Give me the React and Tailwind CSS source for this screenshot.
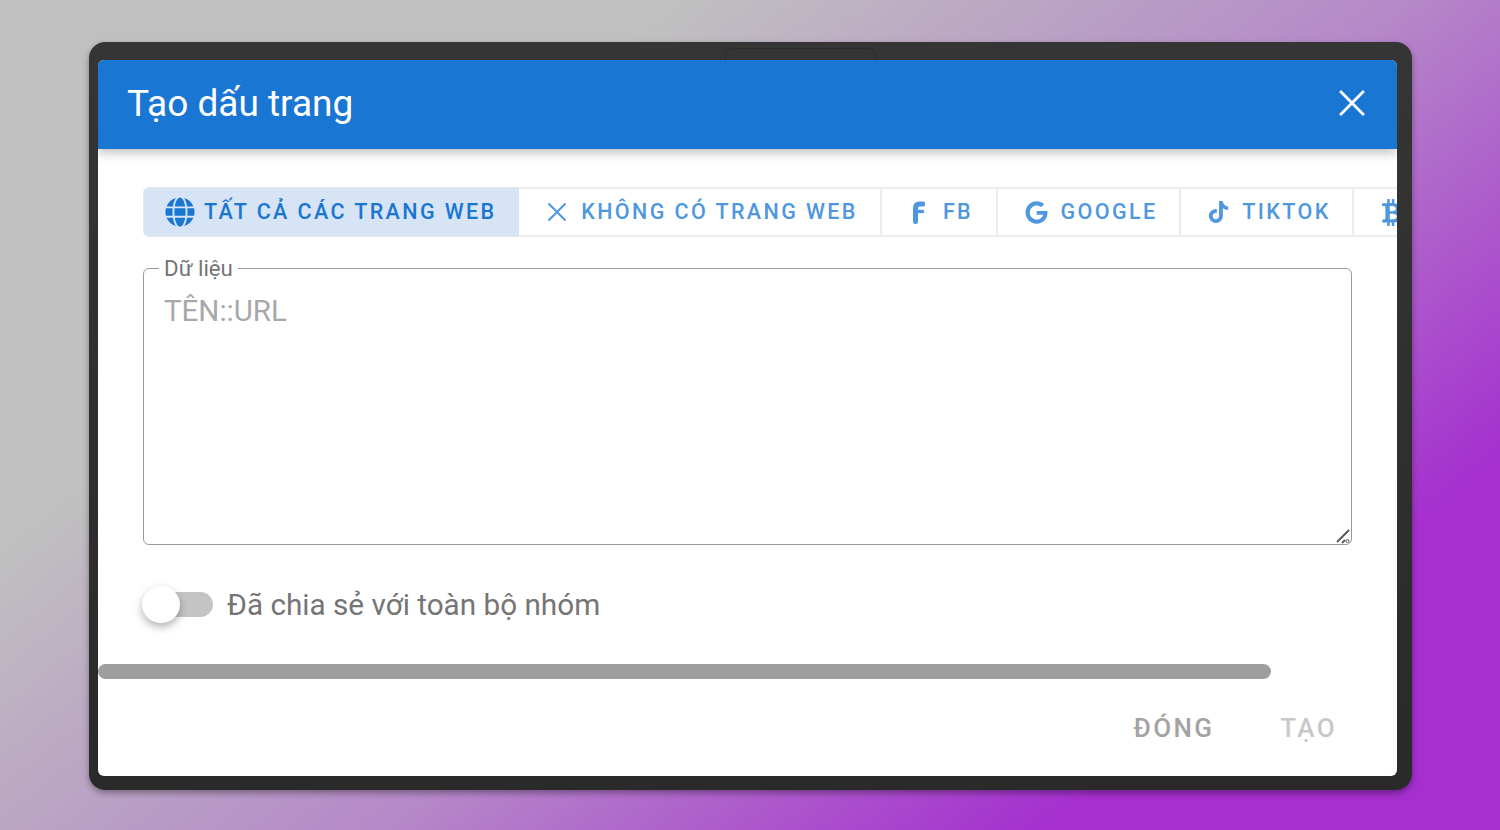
import { FaGlobe, FaGoogle, FaTiktok, FaBtc } from 'react-icons/fa'

function CloseIcon({ className = 'w-[20px] h-[20px]' }) {
  return (
    <svg className={className} viewBox="0 0 20 20" fill="none" stroke="currentColor" strokeWidth="2">
      <path d="M1.5 1.5l17 17M18.5 1.5l-17 17" />
    </svg>
  )
}

function FbIcon() {
  return (
    <svg className="w-[14px] h-[23px]" viewBox="0 0 14 23" fill="none" stroke="currentColor" strokeWidth="5" strokeLinecap="round">
      <path d="M4.5 20.5V7c0-2.6 1.4-4 4-4H12" strokeWidth="5" />
      <path d="M4.5 10.5H11.5" strokeWidth="3.5" />
    </svg>
  )
}

const tabs = [
  { label: 'KHÔNG CÓ TRANG WEB', w: 'w-[363px]', gap: 'gap-[14px]', icon: <CloseIcon /> },
  { label: 'FB', w: 'w-[116px]', gap: 'gap-[18px]', icon: <FbIcon /> },
  { label: 'GOOGLE', w: 'w-[183px]', gap: 'gap-[12px]', icon: <FaGoogle className="w-[23px] h-[23px]" /> },
  { label: 'TIKTOK', w: 'w-[173px]', gap: 'gap-[13px]', icon: <FaTiktok className="w-[21px] h-[22px]" /> },
]

export default function App() {
  return (
    <div className="h-[830px] pt-[42px] pl-[89px] overflow-hidden bg-[linear-gradient(141deg,#c0c0c0_0%,#c0c0c0_27%,#b588c8_56%,#a52fcf_82%,#a52fcf_100%)] font-['Roboto',sans-serif]">
      {/* Tablet frame */}
      <div className="relative w-[1323px] h-[748px] pt-[18px] pl-[9px] pr-[15px] pb-[14px] rounded-[16px] bg-[linear-gradient(180deg,#353535,#2a2a2a)] shadow-[0_3px_6px_rgba(0,0,0,0.35)]">
        <div className="absolute left-[636px] top-[6px] w-[151px] h-[12px] rounded-t-[8px] border border-b-0 border-[#272c33]" />

        <div className="relative flex flex-col w-full h-full bg-white rounded-[6px] overflow-hidden">
          <header className="relative z-10 flex items-center justify-between shrink-0 h-[89px] pl-[29px] pr-[31px] pb-[3px] bg-[#1976d2] text-white shadow-[0_4px_10px_rgba(0,0,0,0.25)]">
            <h1 className="text-[37px] leading-none font-normal">Tạo dấu trang</h1>
            <CloseIcon className="w-[28px] h-[28px]" />
          </header>

          <div className="flex-1 pl-[45px] pt-[38px] overflow-hidden">
            {/* Tabs */}
            <div className="flex h-[50px] w-[1300px] text-[#1976d2] text-[21.5px] font-medium tracking-[0.112em]">
              <div className="flex items-center gap-[9px] shrink-0 w-[376px] pl-[21px] bg-[#d6e4f5] border border-r-0 border-[#e4e8ee] rounded-l-[6px]">
                <FaGlobe className="w-[30px] h-[30px]" />
                <span>TẤT CẢ CÁC TRANG WEB</span>
              </div>
              {tabs.map(t => (
                <div key={t.label} className={`flex items-center justify-center shrink-0 pl-[6px] ${t.gap} ${t.w} border-y-2 border-r-2 border-[#ececec] text-[#4f97de]`}>
                  {t.icon}
                  <span>{t.label}</span>
                </div>
              ))}
              <div className="flex items-center shrink-0 pl-[26px] border-y-2 border-[#ececec] text-[#4f97de]">
                <FaBtc className="w-[24px] h-[27px]" />
              </div>
            </div>

            {/* Text field */}
            <div className="relative w-[1209px] h-[277px] mt-[31px]">
              <textarea
                placeholder="TÊN::URL"
                className="block w-full h-full px-[20px] pt-[24px] resize-none outline-none border border-[#9a9a9a] rounded-[6px] text-[29.5px] leading-[36px] placeholder:text-[#a8a8a8]"
              />
              <label className="absolute left-[16px] top-[-12px] px-[5px] bg-white text-[22.3px] leading-[24px] text-[#757575]">Dữ liệu</label>
              <svg className="absolute right-[1px] bottom-[1px] w-[15px] h-[15px] text-[#555]" viewBox="0 0 15 15" fill="none" stroke="currentColor" strokeWidth="1.8">
                <path d="M1 13L13 1M6 14l3-3" />
                <circle cx="11.5" cy="12" r="1.5" strokeWidth="1" />
              </svg>
            </div>

            {/* Switch */}
            <div className="flex items-center h-[38px] mt-[41px]">
              <div className="relative w-[70px] h-[38px] shrink-0">
                <div className="absolute left-[17px] right-0 top-[6px] h-[25px] rounded-full bg-[#c4c4c4]" />
                <div className="absolute left-[-1px] top-0 w-[38px] h-[37px] rounded-full bg-white shadow-[0_4px_8px_rgba(0,0,0,0.3)]" />
              </div>
              <span className="ml-[14px] text-[29.7px] leading-none text-[#757575]">Đã chia sẻ với toàn bộ nhóm</span>
            </div>
          </div>

          {/* Scrollbar */}
          <div className="shrink-0 w-[1173px] h-[15px] rounded-full bg-[#9e9e9e]" />

          <footer className="flex items-center justify-end shrink-0 h-[97px] pt-[2px] pr-[60px] gap-[66px] text-[26px] font-medium tracking-[0.09em]">
            <span className="text-[#a3a3a3]">ĐÓNG</span>
            <span className="text-[#c8c8c8]">TẠO</span>
          </footer>
        </div>
      </div>
    </div>
  )
}
